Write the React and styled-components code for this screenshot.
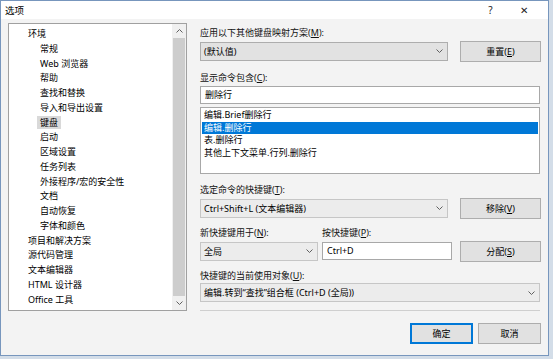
import React from "react";
import styled, { createGlobalStyle } from "styled-components";

const treeItems = [
  { text: "环境", level: 0 },
  { text: "常规", level: 1 },
  { text: "Web 浏览器", level: 1 },
  { text: "帮助", level: 1 },
  { text: "查找和替换", level: 1 },
  { text: "导入和导出设置", level: 1 },
  { text: "键盘", level: 1, selected: true },
  { text: "启动", level: 1 },
  { text: "区域设置", level: 1 },
  { text: "任务列表", level: 1 },
  { text: "外接程序/宏的安全性", level: 1 },
  { text: "文档", level: 1 },
  { text: "自动恢复", level: 1 },
  { text: "字体和颜色", level: 1 },
  { text: "项目和解决方案", level: 0 },
  { text: "源代码管理", level: 0 },
  { text: "文本编辑器", level: 0 },
  { text: "HTML 设计器", level: 0 },
  { text: "Office 工具", level: 0 },
];

const commands = [
  { text: "编辑.Brief删除行" },
  { text: "编辑.删除行", selected: true },
  { text: "表.删除行" },
  { text: "其他上下文菜单.行列.删除行" },
];

function Chevron({ down }) {
  return (
    <svg width="7" height="4" viewBox="0 0 7 4">
      <polyline
        points={down ? "0.5,0.5 3.5,3.5 6.5,0.5" : "0.5,3.5 3.5,0.5 6.5,3.5"}
        fill="none"
        stroke="#606060"
        strokeWidth="1"
      />
    </svg>
  );
}

function Combo({ width, dark, children }) {
  return (
    <ComboBox $width={width} $dark={dark}>
      <ComboText>{children}</ComboText>
      <ComboArrow>
        <Chevron down />
      </ComboArrow>
    </ComboBox>
  );
}

function App() {
  return (
    <>
      <GlobalStyle />
      <Dialog>
        <TitleBar>
          <TitleText>选项</TitleText>
          <TitleButton>?</TitleButton>
          <TitleButton $close>✕</TitleButton>
        </TitleBar>
        <Body>
          <Tree>
            <TreeList>
              {treeItems.map((item) => (
                <TreeRow key={item.text} $level={item.level}>
                  <TreeLabel $selected={item.selected}>{item.text}</TreeLabel>
                </TreeRow>
              ))}
            </TreeList>
            <ScrollBar>
              <ScrollButton>
                <Chevron />
              </ScrollButton>
              <Thumb />
              <ScrollButton>
                <Chevron down />
              </ScrollButton>
            </ScrollBar>
          </Tree>

          <Panel>
            <Label $top={3}>
              应用以下其他键盘映射方案(<u>M</u>):
            </Label>
            <Row>
              <Combo width={248} dark>
                (默认值)
              </Combo>
              <Button>
                重置(<u>E</u>)
              </Button>
            </Row>

            <Label $top={9}>
              显示命令包含(<u>C</u>):
            </Label>
            <TextBox $width={340} $top={1}>
              删除行
            </TextBox>
            <CommandList>
              {commands.map((c) => (
                <CommandRow key={c.text} $selected={c.selected}>
                  {c.text}
                </CommandRow>
              ))}
            </CommandList>

            <Label $top={9}>
              选定命令的快捷键(<u>T</u>):
            </Label>
            <Row>
              <Combo width={248}>Ctrl+Shift+L (文本编辑器)</Combo>
              <Button>
                移除(<u>V</u>)
              </Button>
            </Row>

            <LabelRow>
              <Label $width={122}>
                新快捷键用于(<u>N</u>):
              </Label>
              <Label>
                按快捷键(<u>P</u>):
              </Label>
            </LabelRow>
            <Row>
              <Combo width={118}>全局</Combo>
              <TextBox $width={130}>Ctrl+D</TextBox>
              <Button>
                分配(<u>S</u>)
              </Button>
            </Row>

            <Label $top={7}>
              快捷键的当前使用对象(<u>U</u>):
            </Label>
            <Combo width={340}>编辑.转到“查找”组合框 (Ctrl+D (全局))</Combo>

            <Separator />
            <Footer>
              <Button $default $width={63}>
                确定
              </Button>
              <Button $width={63}>取消</Button>
            </Footer>
          </Panel>
        </Body>
      </Dialog>
    </>
  );
}

export default App;

const GlobalStyle = createGlobalStyle`
  html, body {
    margin: 0;
    padding: 0;
    background: #d3dde8;
  }
  body {
    font-family: "Noto Sans", "Noto Sans CJK SC", sans-serif;
    font-size: 9px;
    color: #000;
  }
  u {
    text-decoration: underline;
  }
`;

const Dialog = styled.div`
  width: 547px;
  height: 354px;
  border: 1px solid #7796bd;
  background: #f3f3f3;
  display: flex;
  flex-direction: column;
  overflow: hidden;
`;

const TitleBar = styled.div`
  height: 18px;
  background: #fff;
  display: flex;
  align-items: center;
  padding-left: 4px;
`;

const TitleText = styled.span`
  flex: 1;
  font-size: 9.5px;
`;

const TitleButton = styled.span`
  width: 33px;
  text-align: center;
  font-size: 10px;
  color: #222;
  margin-right: ${(p) => (p.$close ? "8px" : "0")};
`;

const Body = styled.div`
  display: flex;
  padding: 4px 0 0 7px;
  gap: 13px;
`;

const Tree = styled.div`
  width: 177px;
  height: 286px;
  border: 1px solid #a0a0a0;
  background: #fff;
  display: flex;
`;

const TreeList = styled.div`
  flex: 1;
  padding-top: 3px;
`;

const TreeRow = styled.div`
  height: 14.75px;
  line-height: 14.75px;
  padding-left: ${(p) => (p.$level ? 31 : 19)}px;
  white-space: nowrap;
`;

const TreeLabel = styled.span`
  display: inline-block;
  padding: 0 3px;
  margin-left: -3px;
  line-height: 13px;
  background: ${(p) => (p.$selected ? "#d9d9d9" : "transparent")};
`;

const ScrollBar = styled.div`
  width: 14px;
  background: #f0f0f0;
  display: flex;
  flex-direction: column;
`;

const ScrollButton = styled.div`
  height: 14px;
  display: flex;
  align-items: center;
  justify-content: center;
`;

const Thumb = styled.div`
  flex: 1;
  margin: 0 1px;
  background: #cdcdcd;
`;

const Panel = styled.div`
  width: 341px;
  display: flex;
  flex-direction: column;
`;

const Label = styled.div`
  margin-top: ${(p) => p.$top || 0}px;
  width: ${(p) => (p.$width ? `${p.$width}px` : "auto")};
  height: 14px;
  line-height: 14px;
  color: #111;
  white-space: nowrap;
`;

const LabelRow = styled.div`
  display: flex;
  margin-top: 7px;
`;

const Row = styled.div`
  display: flex;
  align-items: center;
  gap: 4px;
  height: 22px;

  & > :last-child {
    margin-left: auto;
  }
`;

const ComboBox = styled.div`
  width: ${(p) => p.$width}px;
  height: 19px;
  box-sizing: border-box;
  border: 1px solid ${(p) => (p.$dark ? "#adadad" : "#c6c6c6")};
  background: ${(p) => (p.$dark ? "#e2e2e2" : "#ececec")};
  display: flex;
  align-items: center;
`;

const ComboText = styled.span`
  flex: 1;
  padding-left: 3px;
  white-space: nowrap;
  overflow: hidden;
`;

const ComboArrow = styled.span`
  width: 16px;
  display: flex;
  justify-content: center;
`;

const TextBox = styled.div`
  width: ${(p) => p.$width}px;
  margin-top: ${(p) => p.$top || 0}px;
  height: 18px;
  box-sizing: border-box;
  border: 1px solid #a8a8a8;
  background: #fff;
  padding-left: 4px;
  line-height: 16px;
`;

const CommandList = styled.div`
  margin-top: 3px;
  width: 340px;
  height: 67px;
  box-sizing: border-box;
  border: 1px solid #a8a8a8;
  background: #fff;
  padding: 1px 1px 0;
`;

const CommandRow = styled.div`
  height: 12.7px;
  line-height: 12.7px;
  padding-left: 2px;
  white-space: nowrap;
  background: ${(p) => (p.$selected ? "#0078d7" : "transparent")};
  color: ${(p) => (p.$selected ? "#fff" : "#000")};
`;

const Button = styled.div`
  width: ${(p) => p.$width || 81}px;
  height: 21px;
  box-sizing: border-box;
  border: 1px solid ${(p) => (p.$default ? "#0078d7" : "#adadad")};
  box-shadow: ${(p) => (p.$default ? "inset 0 0 0 1px #0078d7" : "none")};
  background: #e1e1e1;
  display: flex;
  align-items: center;
  justify-content: center;
  white-space: nowrap;
`;

const Separator = styled.div`
  margin-top: 8px;
  width: 340px;
  height: 1px;
  background: #cfcfcf;
`;

const Footer = styled.div`
  margin-top: 12px;
  display: flex;
  justify-content: flex-end;
  gap: 5px;
`;
